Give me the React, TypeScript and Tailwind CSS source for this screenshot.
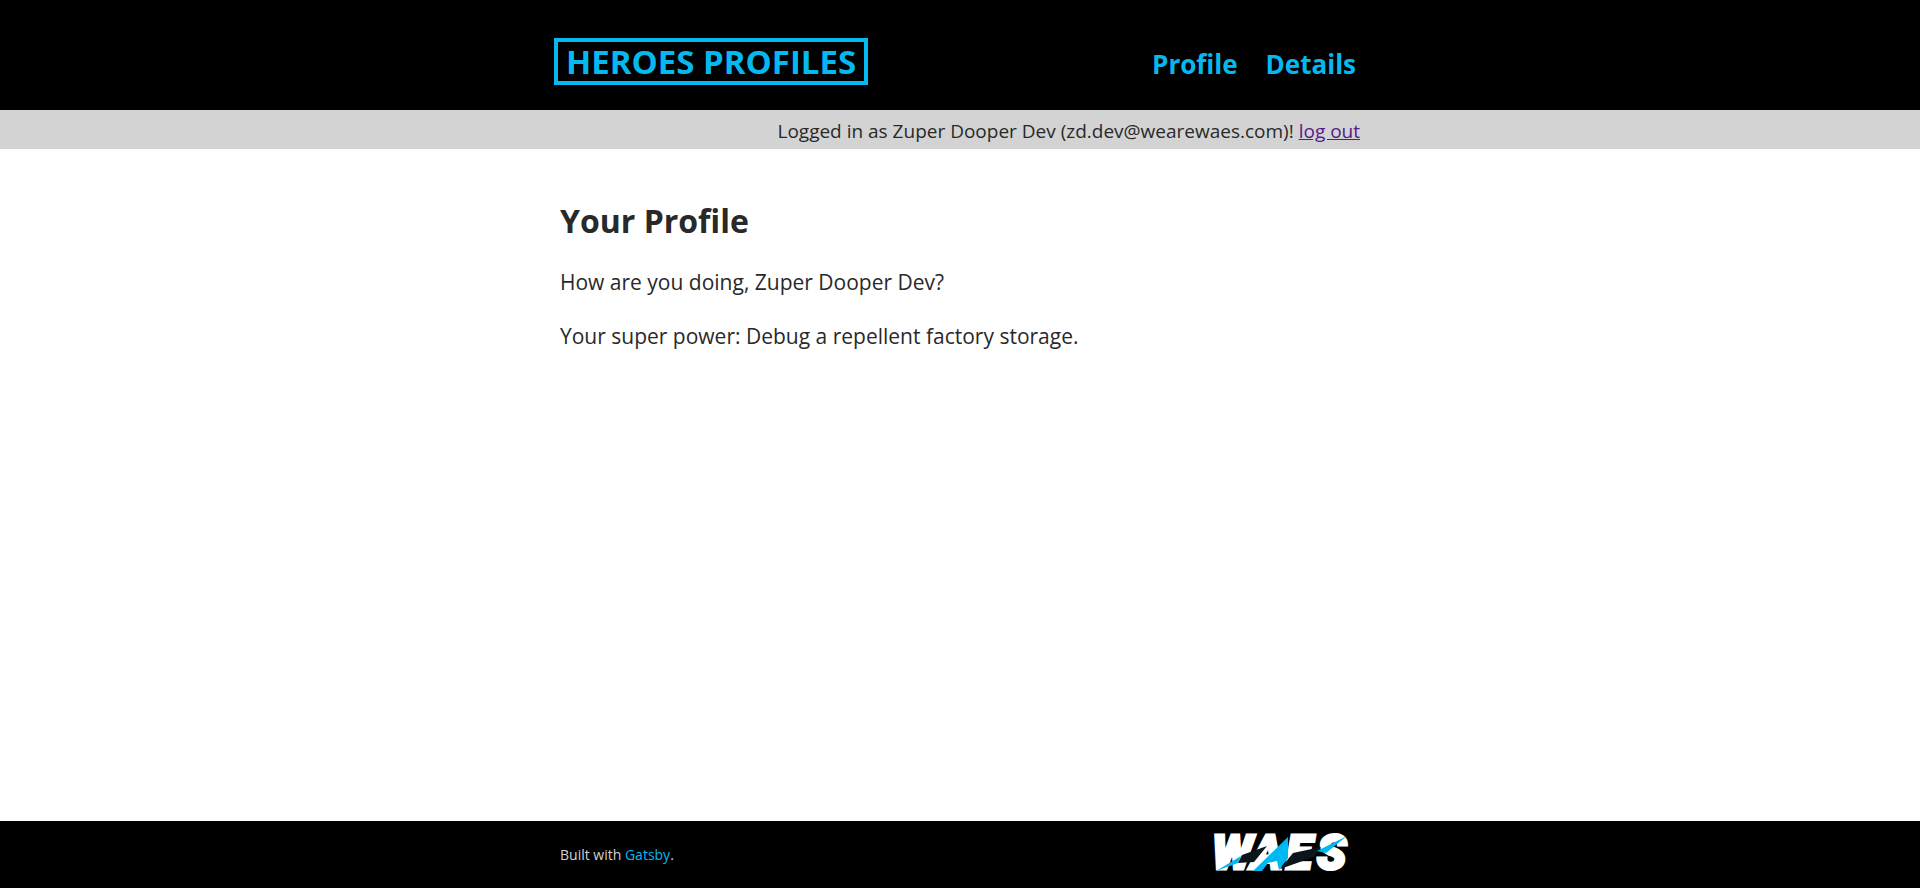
const navLinks = [
  { label: "Profile", href: "#profile" },
  { label: "Details", href: "#details" },
];

function WaesLogo() {
  return (
    <svg width="160" height="67" viewBox="0 0 160 67" role="img" aria-label="WAES">
      <text
        x="12 51 86 117"
        y="48"
        fill="#fff"
        stroke="#fff"
        strokeWidth="3"
        fontFamily="Roboto, sans-serif"
        fontSize="48"
        fontWeight="900"
        fontStyle="italic"
      >
        WAES
      </text>
      <polygon points="16,50 41,35 38,42" fill="#00b8f1" />
      <polygon points="38,42 42,34 67,25 54,41" fill="#0c141c" />
      <polygon points="53,50 88,16 88,37 79,49 77,40 68,42 62,50" fill="#00b8f1" />
      <polygon points="80,48 93,32 121,26 114,36" fill="#0c141c" />
      <polygon points="117,30 147,15 126,32" fill="#00b8f1" />
    </svg>
  );
}

export default function App() {
  return (
    <div className="flex min-h-screen flex-col bg-white font-['Open_Sans','Noto_Sans',sans-serif] text-[#292929]">
      <header className="bg-black">
        <div className="mx-auto flex h-[110px] max-w-[812px] items-center justify-between pt-3">
          <a
            href="#home"
            className="border-4 border-[#05b9f0] px-2 text-[33px] leading-[39px] font-bold text-[#05b9f0] uppercase"
          >
            Heroes Profiles
          </a>
          <nav className="flex gap-7 pt-1.5 pr-2.5 text-[26px] font-bold text-[#05b9f0]">
            {navLinks.map((link) => (
              <a key={link.label} href={link.href}>
                {link.label}
              </a>
            ))}
          </nav>
        </div>
      </header>

      <div className="bg-[#d3d3d3]">
        <p className="mx-auto max-w-[800px] pt-1 text-right text-[19px] leading-[35px]">
          Logged in as Zuper Dooper Dev (zd.dev@wearewaes.com)!{" "}
          <a href="#logout" className="text-[#551a8b] underline">
            log out
          </a>
        </p>
      </div>

      <main className="mx-auto flex w-full max-w-[800px] grow flex-col gap-[22px] pt-12">
        <h1 className="text-[32px] leading-[47px] font-bold">Your Profile</h1>
        <p className="text-[21px] leading-8">How are you doing, Zuper Dooper Dev?</p>
        <p className="text-[21px] leading-8">
          Your super power: Debug a repellent factory storage.
        </p>
      </main>

      <footer className="bg-black">
        <div className="mx-auto flex h-[67px] max-w-[800px] items-center justify-between text-sm text-[#d3d3d3]">
          <p>
            Built with{" "}
            <a href="https://www.gatsbyjs.org" className="text-[#05b9f0]">
              Gatsby
            </a>
            .
          </p>
          <WaesLogo />
        </div>
      </footer>
    </div>
  );
}
